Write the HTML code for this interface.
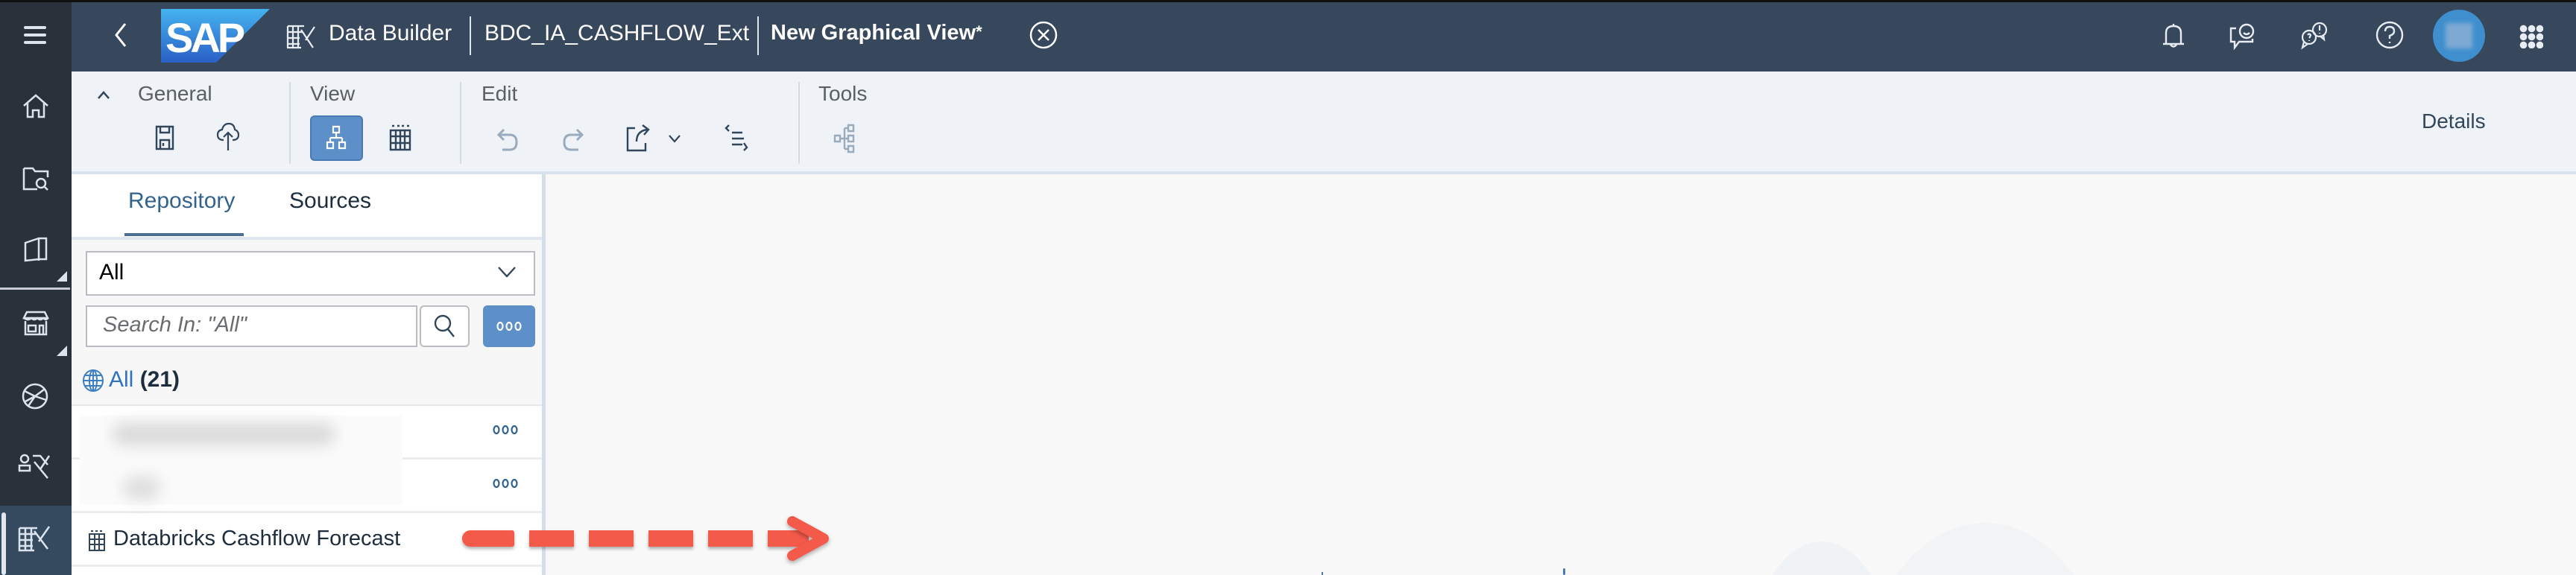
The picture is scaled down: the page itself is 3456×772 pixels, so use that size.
<!DOCTYPE html>
<html style="overflow:hidden"><head><meta charset="utf-8"><style>
*{margin:0;padding:0;box-sizing:border-box}
html,body{width:3456px;height:772px;overflow:hidden}
#w{position:relative;width:3456px;height:772px;overflow:hidden;background:#f8f8f8;font-family:"Liberation Sans",sans-serif}
.a{position:absolute}
svg{position:absolute;overflow:visible}
.t{position:absolute;white-space:nowrap}
</style></head><body><div id="w">
<div class="a" style="left:0;top:0;width:3456px;height:96px;background:#37475c;border-top:3px solid #111"></div>
<div class="a" style="left:0;top:0;width:96px;height:772px;background:#29313a;border-top:3px solid #111"></div>
<div class="a" style="left:0;top:386px;width:94px;height:3px;background:#c8ccd2"></div>
<div class="a" style="left:0;top:679px;width:96px;height:93px;background:#354a5f"></div>
<div class="a" style="left:2px;top:688px;width:6px;height:84px;background:#dfe7f1;border-radius:3px"></div>
<div class="a" style="left:32px;top:35px;width:30px;height:4px;background:#dbe3ee;border-radius:2px"></div>
<div class="a" style="left:32px;top:45px;width:30px;height:4px;background:#dbe3ee;border-radius:2px"></div>
<div class="a" style="left:32px;top:55px;width:30px;height:4px;background:#dbe3ee;border-radius:2px"></div>
<svg style="left:30px;top:125px" width="36" height="36" fill="none" stroke="#dbe3ee" stroke-width="2.5"><path d="M2 17L18 3L34 17M7 13V32H14V23H22V32H29V13"/></svg>
<svg style="left:30px;top:222px" width="36" height="36" fill="none" stroke="#dbe3ee" stroke-width="2.5"><path d="M2 4H14L17 8H34V16M20 32H2V4"/><circle cx="25" cy="24" r="6"/><path d="M29 28L34 33"/></svg>
<svg style="left:32px;top:318px" width="36" height="36" fill="none" stroke="#dbe3ee" stroke-width="2.5"><path d="M2 8L20 2H30V30H20L2 32ZM20 2V32"/></svg>
<div class="a" style="left:76px;top:364px;width:0;height:0;border-left:14px solid transparent;border-bottom:14px solid #dbe3ee"></div>
<svg style="left:30px;top:417px" width="36" height="36" fill="none" stroke="#dbe3ee" stroke-width="2.5"><path d="M2 10L6 2H30L34 10ZM2 10Q8 14 12 10Q16 14 20 10Q24 14 28 10Q32 14 34 10M4 14V32H32V14M8 20H18V28H8ZM23 32V20H28V32"/></svg>
<div class="a" style="left:76px;top:464px;width:0;height:0;border-left:14px solid transparent;border-bottom:14px solid #dbe3ee"></div>
<svg style="left:28px;top:513px" width="38" height="38" fill="none" stroke="#dbe3ee" stroke-width="2.5"><circle cx="19" cy="19" r="16"/><path d="M5 12L19 19L31 10M19 19L10 32M19 19L34 24M6 26L19 19"/></svg>
<svg style="left:24px;top:608px" width="46" height="40" fill="none" stroke="#dbe3ee" stroke-width="2.5"><circle cx="9" cy="8" r="5"/><path d="M2 17H16V24H2ZM20 4L30 4L40 16M22 12L40 34M42 4L30 22"/></svg>
<svg style="left:24px;top:703px" width="46" height="40" fill="none" stroke="#dbe3ee" stroke-width="2.5"><path d="M2 6H26M2 6V36H22M2 14H24M2 22H20M2 30H20M10 6V36M18 6V36M22 10L40 34M42 4L28 24"/></svg>
<svg style="left:152px;top:30px" width="20" height="34" fill="none" stroke="#fff" stroke-width="3"><path d="M16 2L4 17L16 32"/></svg>
<svg style="left:216px;top:12px" width="146" height="72"><defs><linearGradient id="g" x1="0" y1="0" x2="0" y2="1"><stop offset="0" stop-color="#45b3ef"/><stop offset="1" stop-color="#2a60c6"/></linearGradient></defs><path d="M0 0H146L74 72H0Z" fill="url(#g)"/><text x="6" y="58" font-family="Liberation Sans" font-weight="bold" font-size="56" fill="#fff" letter-spacing="-4">SAP</text></svg>
<svg style="left:384px;top:30px" width="40" height="38" fill="none" stroke="#e8edf3" stroke-width="2.2"><path d="M2 5H24M2 5V34H20M2 13H22M2 21H18M2 29H18M9 5V34M16 5V34M20 10L36 34M38 6L26 24"/></svg>
<div class="t" style="left:441px;top:28px;font-size:30px;color:#fff">Data Builder</div>
<div class="a" style="left:630px;top:22px;width:2px;height:52px;background:#dfe5ec"></div>
<div class="t" style="left:650px;top:28px;font-size:30px;color:#fff">BDC_IA_CASHFLOW_Ext</div>
<div class="a" style="left:1016px;top:22px;width:2px;height:52px;background:#dfe5ec"></div>
<div class="t" style="left:1034px;top:28px;font-size:29px;color:#fff;font-weight:bold">New Graphical View<span style="font-size:22px;vertical-align:3px">*</span></div>
<svg style="left:1380px;top:27px" width="40" height="40" fill="none" stroke="#fff" stroke-width="2.5"><circle cx="20" cy="20" r="17"/><path d="M13 13L27 27M27 13L13 27"/></svg>
<svg style="left:2900px;top:30px" width="32" height="36" fill="none" stroke="#e8edf3" stroke-width="2.4"><path d="M16 2V5M6 29V14Q6 5 16 5Q26 5 26 14V29H30H2Z"/><path d="M12 30Q16 35 20 30"/></svg>
<svg style="left:2990px;top:30px" width="36" height="36" fill="none" stroke="#e8edf3" stroke-width="2.4"><path d="M10 8H3V26H8V34L14 26H32V22"/><circle cx="24" cy="12" r="9"/><path d="M20 14Q24 18 28 14"/></svg>
<svg style="left:3085px;top:28px" width="40" height="38" fill="none" stroke="#e8edf3" stroke-width="2.2"><circle cx="13" cy="22" r="9"/><path d="M6 28L4 36L11 31"/><circle cx="27" cy="12" r="9"/><path d="M32 18L33 25L27 20M27 6V13M27 16V17M11 19Q13 16 15 19Q14 22 13 23M13 26V27"/></svg>
<svg style="left:3186px;top:27px" width="40" height="40" fill="none" stroke="#e8edf3" stroke-width="2.4"><circle cx="20" cy="20" r="17"/><path d="M14 15Q14 9 20 9Q26 9 26 15Q26 19 20 21V25M20 29V31"/></svg>
<div class="a" style="left:3264px;top:13px;width:70px;height:70px;border-radius:50%;background:#3f8fce"></div>
<div class="a" style="left:3281px;top:31px;width:36px;height:34px;background:#7ea9d3;filter:blur(3px)"></div>
<div class="a" style="left:3380px;top:33px;width:32px;height:32px;background:radial-gradient(circle,#e8edf3 4.5px,transparent 5px) 0 0/11px 11px"></div>
<div class="a" style="left:96px;top:96px;width:3360px;height:138px;background:#eff2f7;border-bottom:4px solid #d9e1ec"></div>
<svg style="left:130px;top:122px" width="18" height="12" fill="none" stroke="#32465b" stroke-width="2.5"><path d="M2 10L9 2L16 10"/></svg>
<div class="t" style="left:185px;top:110px;font-size:28px;color:#5a5f66">General</div>
<svg style="left:208px;top:168px" width="26" height="34" fill="none" stroke="#32465b" stroke-width="2.4"><path d="M2 2H24V32H2ZM7 2V10H19V2M7 32V20H19V32M11 24V28"/></svg>
<svg style="left:290px;top:164px" width="32" height="40" fill="none" stroke="#32465b" stroke-width="2.2"><path d="M10 24Q2 24 2 17Q2 11 8 10Q10 2 17 2Q24 2 25 10Q30 12 30 17Q30 24 22 24M16 38V14M10 20L16 14L22 20"/></svg>
<div class="a" style="left:388px;top:110px;width:2px;height:110px;background:#d5dbe2"></div>
<div class="t" style="left:416px;top:110px;font-size:28px;color:#5a5f66">View</div>
<div class="a" style="left:416px;top:155px;width:71px;height:61px;background:#5d8fc8;border-radius:6px;border:2px solid #4a7ab3"></div>
<svg style="left:438px;top:168px" width="26" height="34" fill="none" stroke="#fff" stroke-width="2.2"><path d="M9 2H17V10H9ZM13 10V17M5 17H21M5 17V23M21 17V23M1 23H9V31H1ZM17 23H25V31H17Z"/></svg>
<svg style="left:522px;top:167px" width="30" height="36" fill="none" stroke="#32465b" stroke-width="2.4"><path d="M2 8H28V34H2ZM2 16H28M2 25H28M9 8V34M15 8V34M21 8V34M4 2H7M11 2H14M17 2H20M24 2H27"/></svg>
<div class="a" style="left:617px;top:110px;width:2px;height:110px;background:#d5dbe2"></div>
<div class="t" style="left:646px;top:110px;font-size:28px;color:#5a5f66">Edit</div>
<svg style="left:666px;top:172px" width="30" height="32" fill="none" stroke="#9aabbd" stroke-width="3"><path d="M10 2L3 9L10 16M3 9H18Q27 9 27 19Q27 29 18 29H8"/></svg>
<svg style="left:754px;top:172px" width="30" height="32" fill="none" stroke="#9aabbd" stroke-width="3"><path d="M20 2L27 9L20 16M27 9H12Q3 9 3 19Q3 29 12 29H22"/></svg>
<svg style="left:840px;top:166px" width="34" height="38" fill="none" stroke="#32465b" stroke-width="2.4"><path d="M12 6H2V36H26V26M14 24Q14 10 28 8M22 2L30 8L24 15"/></svg>
<svg style="left:896px;top:180px" width="18" height="12" fill="none" stroke="#32465b" stroke-width="2.2"><path d="M2 2L9 10L16 2"/></svg>
<svg style="left:972px;top:166px" width="32" height="38" fill="none" stroke="#32465b" stroke-width="2.4"><path d="M6 2L2 6L6 10M10 12H24M10 20H26M10 28H24M26 26L30 32L26 36"/></svg>
<div class="a" style="left:1071px;top:110px;width:2px;height:110px;background:#d5dbe2"></div>
<div class="t" style="left:1098px;top:110px;font-size:28px;color:#5a5f66">Tools</div>
<svg style="left:1118px;top:166px" width="30" height="40" fill="none" stroke="#9aabbd" stroke-width="2.4"><path d="M2 16H9V24H2ZM9 20H15M15 6V34M15 6H20M15 20H20M15 34H20M20 2H27V10H20ZM20 16H27V24H20ZM20 30H27V38H20Z"/></svg>
<div class="t" style="left:3249px;top:147px;font-size:28px;color:#32465b">Details</div>
<div class="a" style="left:96px;top:234px;width:636px;height:538px;background:#f7f7f7;border-right:5px solid #d5dfeb"></div>
<div class="a" style="left:96px;top:234px;width:631px;height:88px;background:#fff;border-bottom:4px solid #dfe6ef"></div>
<div class="t" style="left:172px;top:253px;font-size:30px;color:#32638f">Repository</div>
<div class="t" style="left:388px;top:253px;font-size:30px;color:#1d2d3e">Sources</div>
<div class="a" style="left:167px;top:313px;width:160px;height:4px;background:#4a6e94"></div>
<div class="a" style="left:115px;top:337px;width:603px;height:60px;background:#fff;border:2px solid #b9bcc0"></div>
<div class="t" style="left:133px;top:349px;font-size:30px;color:#000">All</div>
<svg style="left:667px;top:357px" width="26" height="16" fill="none" stroke="#32465b" stroke-width="2.4"><path d="M2 2L13 14L24 2"/></svg>
<div class="a" style="left:115px;top:410px;width:445px;height:56px;background:#fff;border:2px solid #b9bcc0"></div>
<div class="t" style="left:138px;top:420px;font-size:29px;color:#6a6d70;font-style:italic">Search In: "All"</div>
<div class="a" style="left:563px;top:410px;width:67px;height:56px;background:#fff;border:2px solid #b9bcc0;border-radius:6px"></div>
<svg style="left:582px;top:422px" width="30" height="32" fill="none" stroke="#32465b" stroke-width="2.4"><circle cx="12" cy="12" r="10"/><path d="M19 20L27 30"/></svg>
<div class="a" style="left:648px;top:410px;width:70px;height:56px;background:#5d8fc8;border-radius:6px"></div>
<svg style="left:666px;top:431px" width="36" height="14" fill="none" stroke="#fff" stroke-width="2.2"><ellipse cx="5" cy="7" rx="3.5" ry="5"/><ellipse cx="17" cy="7" rx="3.5" ry="5"/><ellipse cx="29" cy="7" rx="3.5" ry="5"/></svg>
<svg style="left:111px;top:495px" width="30" height="32" fill="none" stroke="#3d7fc5" stroke-width="2"><ellipse cx="14" cy="16" rx="13" ry="14"/><ellipse cx="14" cy="16" rx="5" ry="14"/><path d="M1 16H27M3 9H25M3 23H25M14 2V30"/></svg>
<div class="t" style="left:146px;top:493px;font-size:30px;color:#2f72c4">All <b style="color:#1d2d3e">(21)</b></div>
<div class="a" style="left:96px;top:543px;width:631px;height:229px;background:#fff"></div>
<div class="a" style="left:96px;top:543px;width:631px;height:2px;background:#e3e8ef"></div>
<div class="a" style="left:96px;top:614px;width:631px;height:3px;background:#ececec"></div>
<div class="a" style="left:96px;top:686px;width:631px;height:3px;background:#ececec"></div>
<div class="a" style="left:96px;top:758px;width:631px;height:3px;background:#ececec"></div>
<div class="a" style="left:107px;top:558px;width:433px;height:120px;background:#fbfbfb"></div>
<div class="a" style="left:150px;top:568px;width:300px;height:30px;background:#d9d9d9;filter:blur(10px);border-radius:15px"></div>
<div class="a" style="left:165px;top:640px;width:50px;height:30px;background:#dcdcdc;filter:blur(10px);border-radius:15px"></div>
<svg style="left:661px;top:570px" width="36" height="14" fill="none" stroke="#32638f" stroke-width="2.2"><ellipse cx="5" cy="7" rx="3.5" ry="5"/><ellipse cx="17" cy="7" rx="3.5" ry="5"/><ellipse cx="29" cy="7" rx="3.5" ry="5"/></svg>
<svg style="left:661px;top:642px" width="36" height="14" fill="none" stroke="#32638f" stroke-width="2.2"><ellipse cx="5" cy="7" rx="3.5" ry="5"/><ellipse cx="17" cy="7" rx="3.5" ry="5"/><ellipse cx="29" cy="7" rx="3.5" ry="5"/></svg>
<svg style="left:119px;top:712px" width="22" height="28" fill="none" stroke="#32465b" stroke-width="2"><path d="M1 5H21V27H1ZM1 12H21M1 19H21M8 5V27M14 5V27M3 1H6M9 1H12M15 1H18"/></svg>
<div class="t" style="left:152px;top:707px;font-size:29px;color:#1d2d3e">Databricks Cashflow Forecast</div>
<svg style="left:2340px;top:700px;overflow:hidden" width="500" height="72"><ellipse cx="323" cy="252" rx="171" ry="250" fill="#f1f3f5"/><ellipse cx="104" cy="177" rx="92" ry="150" fill="#eef1f4" opacity=".8"/></svg>
<div class="a" style="left:2097px;top:763px;width:3px;height:9px;background:#4a7ab3;border-radius:2px"></div>
<div class="a" style="left:1773px;top:768px;width:2px;height:4px;background:#4a7ab3"></div>
<div class="a" style="left:620px;top:712px;width:70px;height:22px;background:#f45a4a;border-radius:11px 3px 3px 11px;box-shadow:0 3px 4px rgba(0,0,0,.3)"></div>
<div class="a" style="left:710px;top:712px;width:60px;height:22px;background:#f45a4a;box-shadow:0 3px 4px rgba(0,0,0,.3)"></div>
<div class="a" style="left:790px;top:712px;width:60px;height:22px;background:#f45a4a;box-shadow:0 3px 4px rgba(0,0,0,.3)"></div>
<div class="a" style="left:870px;top:712px;width:60px;height:22px;background:#f45a4a;box-shadow:0 3px 4px rgba(0,0,0,.3)"></div>
<div class="a" style="left:950px;top:712px;width:60px;height:22px;background:#f45a4a;box-shadow:0 3px 4px rgba(0,0,0,.3)"></div>
<div class="a" style="left:1030px;top:712px;width:55px;height:22px;background:#f45a4a;box-shadow:0 3px 4px rgba(0,0,0,.3)"></div>
<svg style="left:1055px;top:693px" width="62" height="60" fill="none" stroke="#f45a4a" stroke-width="14" stroke-linejoin="round" stroke-linecap="round"><path d="M8 7L50 30L8 53" filter="drop-shadow(0 3px 3px rgba(0,0,0,.3))"/></svg>
</div></body></html>
